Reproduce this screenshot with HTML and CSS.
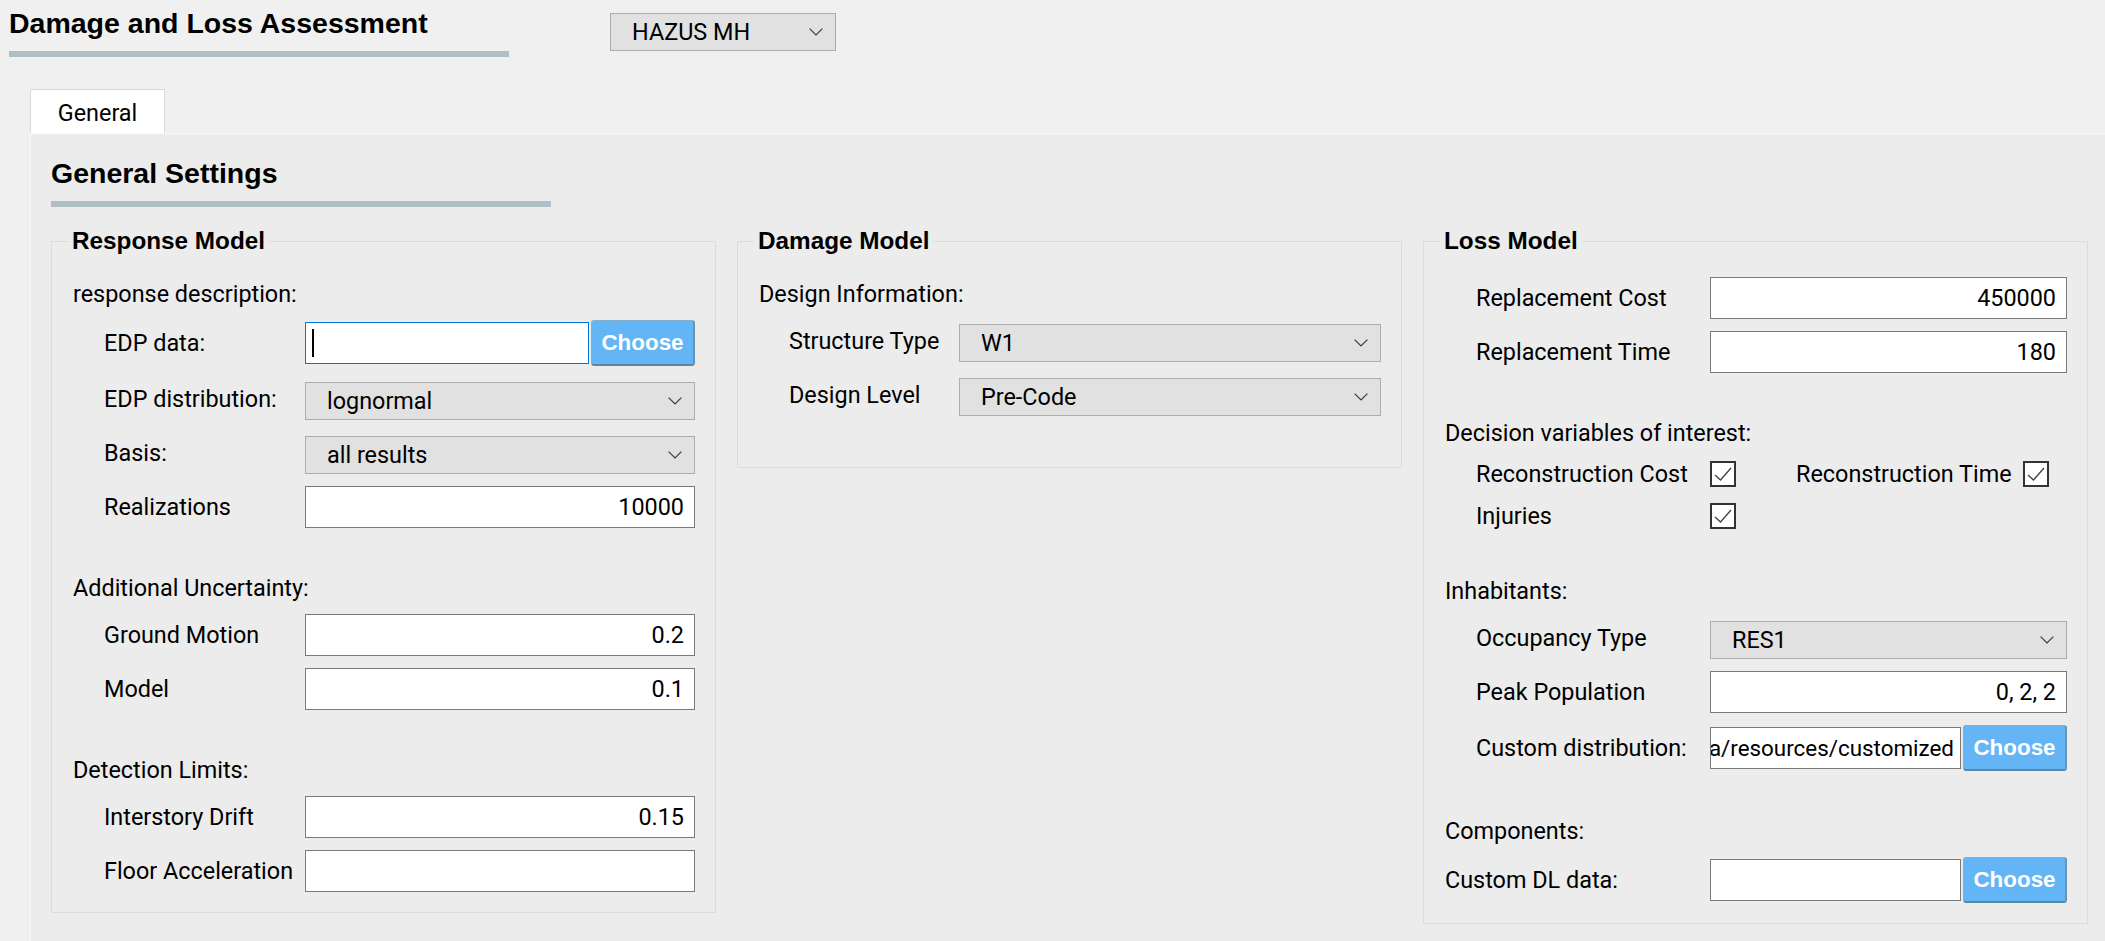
FILE: index.html
```html
<!DOCTYPE html>
<html lang="en">
<head>
<meta charset="utf-8">
<title>Damage and Loss Assessment</title>
<link rel="stylesheet" href="styles.css">
</head>
<body>
<div class="app">
  <header class="topbar">
    <div class="title-block">
      <h1 class="page-title">Damage and Loss Assessment</h1>
      <div class="title-rule"></div>
    </div>
    <div class="combo combo-method"><span class="combo-text">HAZUS MH</span><svg class="chev" viewBox="0 0 14 8"><polyline points="0.6,0.6 7,7 13.4,0.6"/></svg></div>
  </header>

  <nav class="tabbar"><div class="tab tab-active">General</div></nav>

  <main class="panel">
    <h2 class="section-title">General Settings</h2>
    <div class="title-rule title-rule-panel"></div>

    <div class="groups">
      <fieldset class="group group-response">
        <legend class="group-title">Response Model</legend>
        <div class="sub-label sub-first">response description:</div>
        <div class="row">
          <span class="row-label">EDP data:</span>
          <div class="file-field">
            <div class="input input-focus"><span class="caret"></span></div>
            <button class="btn-choose" type="button">Choose</button>
          </div>
        </div>
        <div class="row">
          <span class="row-label">EDP distribution:</span>
          <div class="combo"><span class="combo-text">lognormal</span><svg class="chev" viewBox="0 0 14 8"><polyline points="0.6,0.6 7,7 13.4,0.6"/></svg></div>
        </div>
        <div class="row">
          <span class="row-label">Basis:</span>
          <div class="combo"><span class="combo-text">all results</span><svg class="chev" viewBox="0 0 14 8"><polyline points="0.6,0.6 7,7 13.4,0.6"/></svg></div>
        </div>
        <div class="row">
          <span class="row-label">Realizations</span>
          <div class="input">10000</div>
        </div>

        <div class="sub-label">Additional Uncertainty:</div>
        <div class="row">
          <span class="row-label">Ground Motion</span>
          <div class="input">0.2</div>
        </div>
        <div class="row">
          <span class="row-label">Model</span>
          <div class="input">0.1</div>
        </div>

        <div class="sub-label">Detection Limits:</div>
        <div class="row">
          <span class="row-label">Interstory Drift</span>
          <div class="input">0.15</div>
        </div>
        <div class="row">
          <span class="row-label">Floor Acceleration</span>
          <div class="input"></div>
        </div>
      </fieldset>

      <fieldset class="group group-damage">
        <legend class="group-title">Damage Model</legend>
        <div class="sub-label sub-first">Design Information:</div>
        <div class="row">
          <span class="row-label">Structure Type</span>
          <div class="combo"><span class="combo-text">W1</span><svg class="chev" viewBox="0 0 14 8"><polyline points="0.6,0.6 7,7 13.4,0.6"/></svg></div>
        </div>
        <div class="row">
          <span class="row-label">Design Level</span>
          <div class="combo"><span class="combo-text">Pre-Code</span><svg class="chev" viewBox="0 0 14 8"><polyline points="0.6,0.6 7,7 13.4,0.6"/></svg></div>
        </div>
      </fieldset>

      <fieldset class="group group-loss">
        <legend class="group-title">Loss Model</legend>
        <div class="row row-first">
          <span class="row-label">Replacement Cost</span>
          <div class="input">450000</div>
        </div>
        <div class="row">
          <span class="row-label">Replacement Time</span>
          <div class="input">180</div>
        </div>

        <div class="sub-label">Decision variables of interest:</div>
        <div class="check-grid">
          <span class="check-label">Reconstruction Cost</span>
          <span class="check"><svg viewBox="0 0 22 22"><polyline points="3,12 8.5,17 19,5"/></svg></span>
          <span class="check-label check-label-2">Reconstruction Time</span>
          <span class="check"><svg viewBox="0 0 22 22"><polyline points="3,12 8.5,17 19,5"/></svg></span>
          <span class="check-label">Injuries</span>
          <span class="check"><svg viewBox="0 0 22 22"><polyline points="3,12 8.5,17 19,5"/></svg></span>
        </div>

        <div class="sub-label">Inhabitants:</div>
        <div class="row">
          <span class="row-label">Occupancy Type</span>
          <div class="combo"><span class="combo-text">RES1</span><svg class="chev" viewBox="0 0 14 8"><polyline points="0.6,0.6 7,7 13.4,0.6"/></svg></div>
        </div>
        <div class="row">
          <span class="row-label">Peak Population</span>
          <div class="input">0, 2, 2</div>
        </div>
        <div class="row">
          <span class="row-label">Custom distribution:</span>
          <div class="file-field">
            <div class="input input-path"><span class="path-text">a/resources/customized</span></div>
            <button class="btn-choose" type="button">Choose</button>
          </div>
        </div>

        <div class="sub-label">Components:</div>
        <div class="row row-flush">
          <span class="row-label">Custom DL data:</span>
          <div class="file-field">
            <div class="input"></div>
            <button class="btn-choose" type="button">Choose</button>
          </div>
        </div>
      </fieldset>
    </div>
  </main>
</div>
</body>
</html>
```

FILE: styles.css
```css
* { box-sizing: border-box; }

html, body {
  margin: 0;
  padding: 0;
}

body {
  width: 2105px;
  height: 941px;
  overflow: hidden;
  background: #f0f0f0;
  color: #000;
  font-family: "Roboto", "Liberation Sans", sans-serif;
  font-size: 23.4px;
  line-height: 28px;
}

/* ---------- top bar ---------- */
.topbar {
  display: flex;
  align-items: flex-start;
  height: 57px;
}

.title-block {
  width: 509px;
  padding: 7px 0 0 9px;
}

.page-title,
.section-title {
  margin: 0;
  font-family: "Liberation Sans", Arial, sans-serif;
  font-weight: bold;
  font-size: 28.5px;
  line-height: 33px;
}

.title-rule {
  height: 6px;
  margin-top: 11px;
  background: #b0bec5;
}

.title-rule-panel {
  width: 500px;
}

/* ---------- combos ---------- */
.combo {
  display: flex;
  align-items: center;
  justify-content: space-between;
  height: 38px;
  padding: 0 12px 0 21px;
  background: #e1e1e1;
  border: 1px solid #adadad;
  white-space: nowrap;
}

.combo-method {
  width: 226px;
  margin: 13px 0 0 101px;
}

.chev {
  width: 14px;
  height: 8px;
  fill: none;
  stroke: #3a3a3a;
  stroke-width: 1.2;
}

/* ---------- tabs ---------- */
.tabbar {
  display: flex;
  height: 44px;
  margin-top: 32px;
  padding-left: 30px;
}

.tab {
  width: 135px;
  height: 44px;
  padding-top: 9px;
  text-align: center;
  background: #fff;
  border: 1px solid #d9d9d9;
  border-bottom: none;
}

/* ---------- panel ---------- */
.panel {
  display: block;
  height: 808px;
  margin-left: 30px;
  padding: 23px 0 0 20px;
  background: #ececec;
  border-top: 1px solid #f8f8f8;
  border-left: 1px solid #f8f8f8;
}

.groups {
  display: grid;
  grid-template-columns: repeat(3, 665px);
  column-gap: 21px;
  align-items: start;
  margin-top: 20px;
}

.group {
  margin: 0;
  min-width: 0;
  padding: 0 20px 20px 21px;
  border: 1px solid #dcdcdc;
}

.group-title {
  margin-left: -5px;
  padding: 0 4px;
  font-family: "Liberation Sans", Arial, sans-serif;
  font-weight: bold;
  font-size: 24.3px;
  line-height: 28px;
}

.group-response { --label-col: 232px; --indent: 31px; }
.group-damage   { --label-col: 200px; --indent: 30px; padding-bottom: 51px; }
.group-loss     { --label-col: 265px; --indent: 31px; }

.sub-label {
  margin-top: 46px;
  white-space: nowrap;
}

.sub-first {
  margin-top: 25px;
}

/* ---------- form rows ---------- */
.row {
  display: grid;
  grid-template-columns: var(--label-col) minmax(0, 1fr);
  align-items: center;
  min-height: 42px;
  margin-top: 12px;
}

.row-first {
  margin-top: 22px;
}

.row-label {
  padding-left: var(--indent);
  white-space: nowrap;
}

.row-flush .row-label {
  padding-left: 0;
}

.row .combo {
  margin-top: 4px;
}

.input {
  display: flex;
  align-items: center;
  justify-content: flex-end;
  height: 42px;
  padding: 0 10px;
  background: #fff;
  border: 1px solid #7a7a7a;
  white-space: nowrap;
  overflow: hidden;
}

.input-focus {
  justify-content: flex-start;
  padding-left: 6px;
  border-color: #0078d7;
}

.caret {
  width: 2px;
  height: 28px;
  background: #000;
}

.input-path {
  padding: 0 6px 0 2px;
  font-size: 22.4px;
}

.file-field {
  display: flex;
  align-items: center;
  gap: 2px;
  min-width: 0;
}

.file-field .input {
  flex: 1;
  min-width: 0;
}

.btn-choose {
  flex-shrink: 0;
  width: 104px;
  height: 46px;
  padding: 0;
  color: #fff;
  font-family: "Liberation Sans", Arial, sans-serif;
  font-weight: bold;
  font-size: 22.4px;
  background: #64b5f6;
  border: 1px solid #86afcb;
  border-right: 2px solid #6a94ae;
  border-bottom: 2px solid #5b87a3;
  border-radius: 3px;
}

/* ---------- checkboxes ---------- */
.check-grid {
  display: grid;
  grid-template-columns: 265px 86px 227px 26px;
  grid-auto-rows: 30px;
  row-gap: 12px;
  align-items: center;
  margin-top: 12px;
}

.check-label {
  padding-left: 31px;
  white-space: nowrap;
}

.check-label-2 {
  grid-column: 3;
  padding-left: 0;
}

.check {
  display: block;
  width: 26px;
  height: 26px;
  background: #fff;
  border: 2px solid #333;
}

.check svg {
  display: block;
  width: 22px;
  height: 22px;
  fill: none;
  stroke: #444;
  stroke-width: 1.4;
}
```
